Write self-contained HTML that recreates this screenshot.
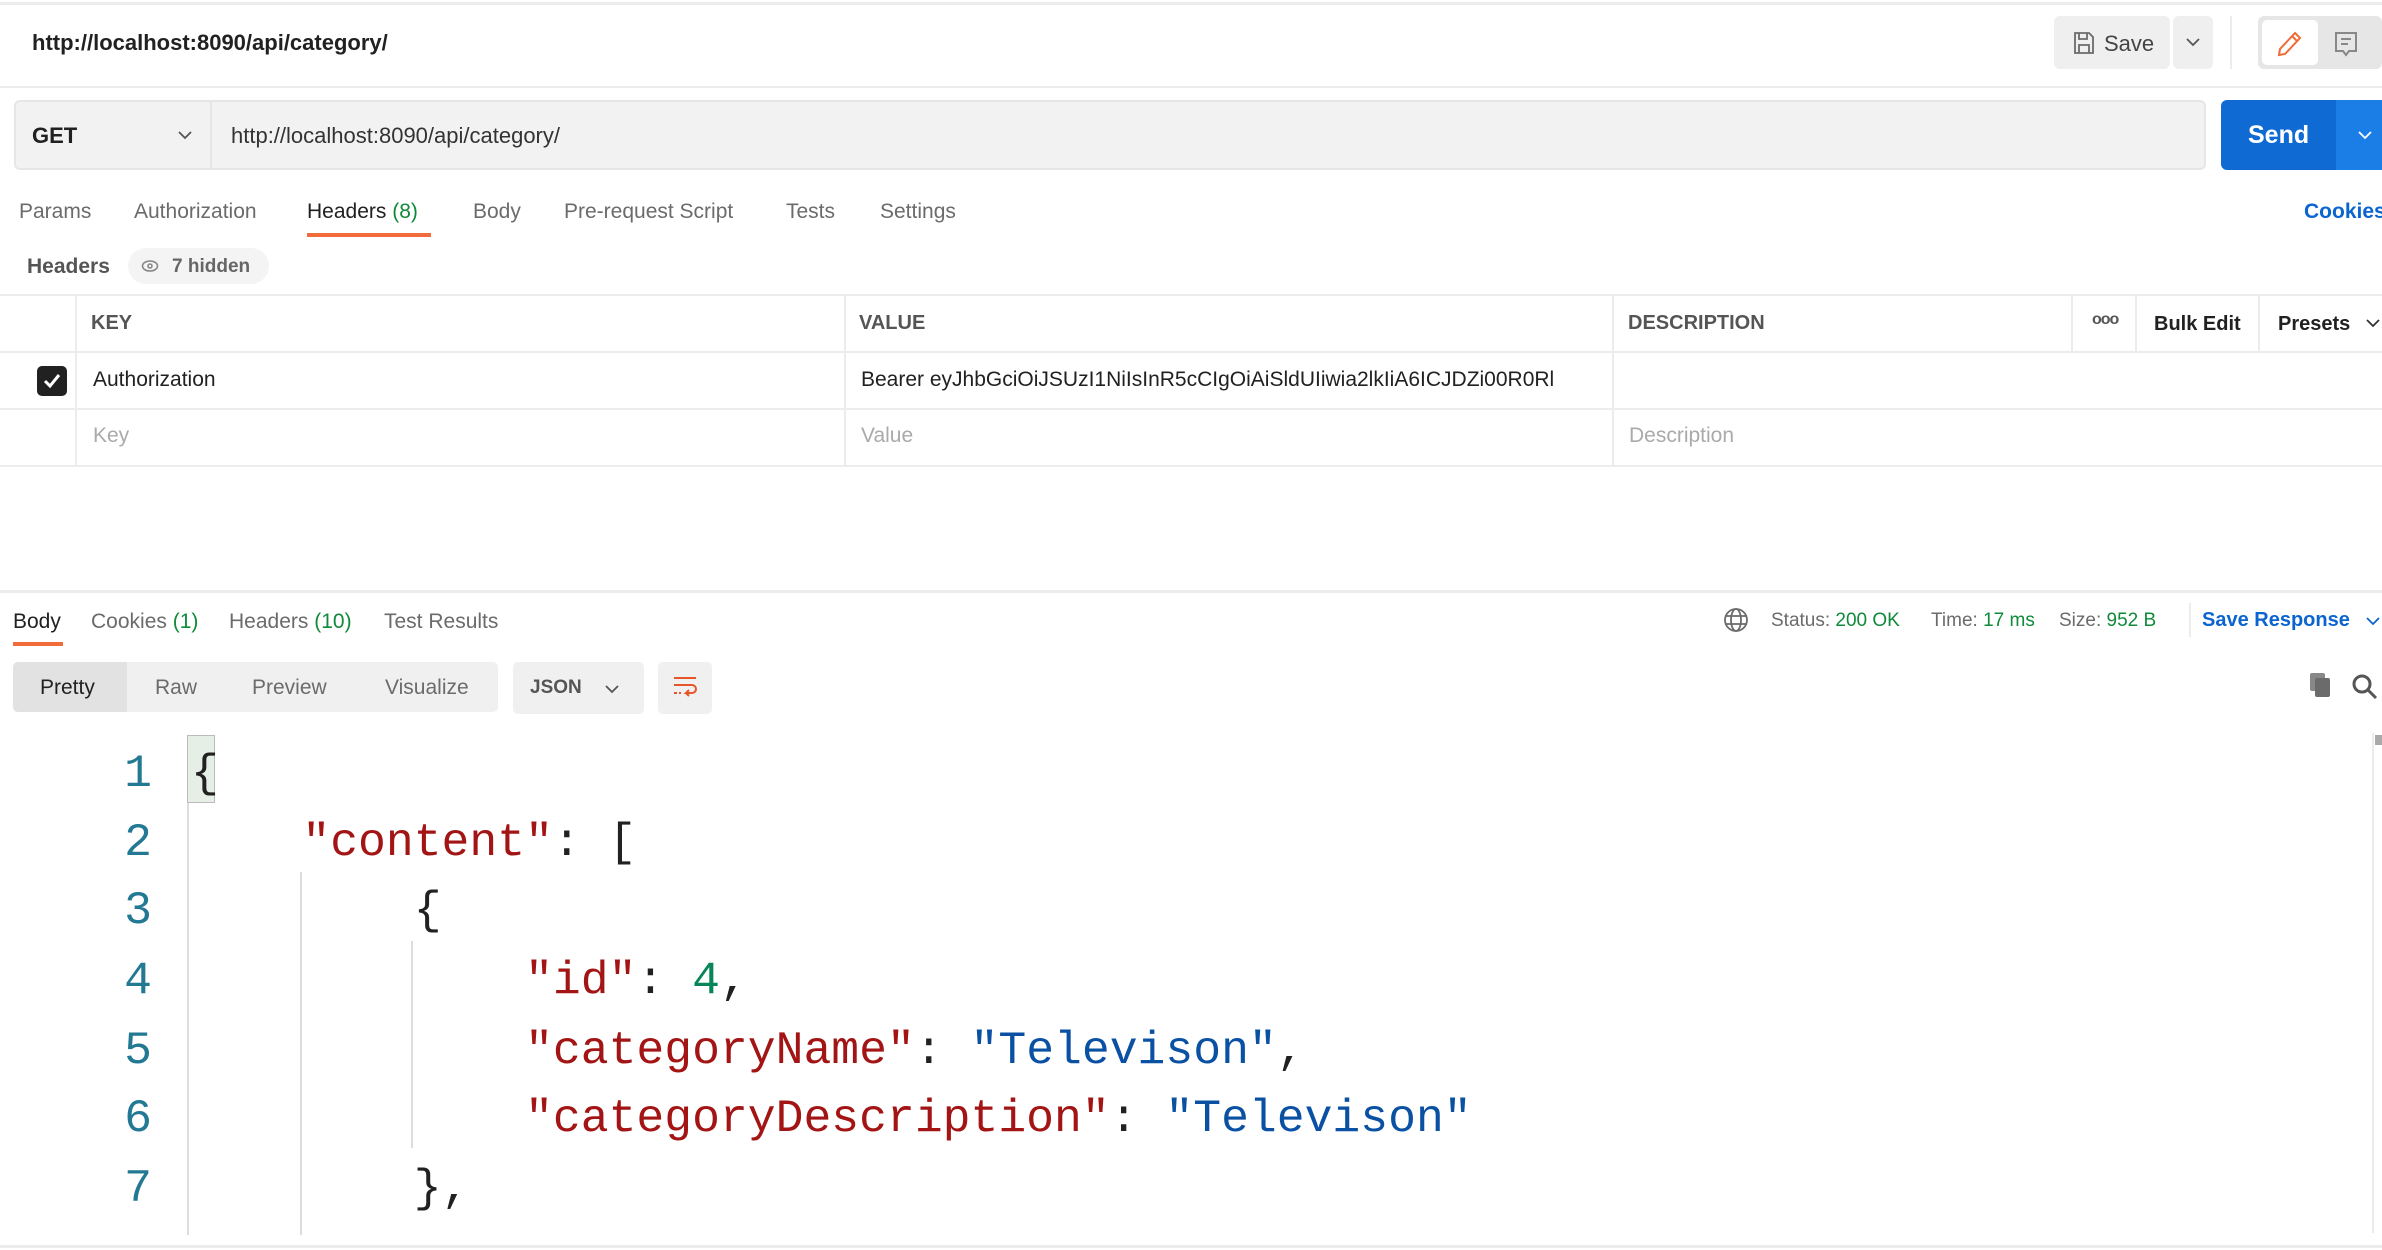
<!DOCTYPE html>
<html><head><meta charset="utf-8"><style>
*{box-sizing:border-box;margin:0;padding:0}
body{width:2382px;height:1250px;overflow:hidden;background:#fff;font-family:"Liberation Sans",sans-serif;color:#212121;position:relative}
.a{position:absolute;white-space:nowrap}
.hl{position:absolute;left:0;right:0;height:2px;background:#ececec}
.vl{position:absolute;width:2px;background:#ececec}
.tab{font-size:21px;color:#6b6b6b}
.g{color:#0f8a3a}
.code{font-family:"Liberation Mono",monospace;font-size:46.4px;white-space:pre}
.s{color:#a31515}.b{color:#0b51a3}.n{color:#098658}
.ln{font-family:"Liberation Mono",monospace;font-size:46.4px;color:#237893;width:60px;text-align:right;left:92px}
</style></head><body>
<div class="hl" style="top:2px;height:3px"></div>
<div class="a" style="left:32px;top:30px;font-size:22px;font-weight:bold;color:#212121">http://localhost:8090/api/category/</div>
<div class="a" style="left:2054px;top:16px;width:116px;height:53px;background:#efefef;border-radius:6px"></div>
<svg class="a" style="left:2072px;top:31px" width="24" height="24" viewBox="0 0 24 24" fill="none" stroke="#6b6b6b" stroke-width="1.8"><path d="M3 2h14l4 4v16H3z M7 2v6h8V2 M7 22v-8h10v8"/></svg>
<div class="a" style="left:2104px;top:31px;font-size:22px;color:#444">Save</div>
<div class="a" style="left:2173px;top:16px;width:40px;height:53px;background:#efefef;border-radius:6px"></div>
<svg class="a" style="left:2184px;top:35px" width="18" height="14" viewBox="0 0 18 14" fill="none" stroke="#555" stroke-width="1.8"><path d="M3 4l6 6 6-6"/></svg>
<div class="a" style="left:2230px;top:16px;width:2px;height:53px;background:#ececec"></div>
<div class="a" style="left:2258px;top:16px;width:124px;height:53px;background:#e6e6e6;border-radius:6px"></div>
<div class="a" style="left:2262px;top:20px;width:56px;height:45px;background:#fff;border-radius:5px"></div>
<svg class="a" style="left:2275px;top:30px" width="28" height="28" viewBox="0 0 28 28" fill="none" stroke="#f06a35" stroke-width="2"><path d="M20 3l5 5L10 24l-6 1 1-6z M17 6l5 5"/></svg>
<svg class="a" style="left:2332px;top:30px" width="28" height="28" viewBox="0 0 28 28" fill="none" stroke="#888" stroke-width="2"><path d="M4 3h20v18H17l-3 4-3-4H4z M9 9h10 M9 14h7"/></svg>
<div class="hl" style="top:86px"></div>
<div class="a" style="left:14px;top:100px;width:2192px;height:70px;background:#f2f2f2;border:2px solid #e6e6e6;border-radius:6px"></div>
<div class="a" style="left:210px;top:102px;width:2px;height:66px;background:#e6e6e6"></div>
<div class="a" style="left:32px;top:123px;font-size:22px;font-weight:bold">GET</div>
<svg class="a" style="left:176px;top:128px" width="18" height="14" viewBox="0 0 18 14" fill="none" stroke="#555" stroke-width="1.8"><path d="M3 4l6 6 6-6"/></svg>
<div class="a" style="left:231px;top:123px;font-size:22px;color:#333">http://localhost:8090/api/category/</div>
<div class="a" style="left:2221px;top:100px;width:161px;height:70px;background:#0f6bd3;border-radius:6px 0 0 6px"></div>
<div class="a" style="left:2336px;top:100px;width:46px;height:70px;background:#1a7ee6"></div>
<div class="a" style="left:2248px;top:121px;font-size:25px;font-weight:bold;color:#fff">Send</div>
<svg class="a" style="left:2356px;top:128px" width="18" height="14" viewBox="0 0 18 14" fill="none" stroke="#fff" stroke-width="1.8"><path d="M3 4l6 6 6-6"/></svg>
<div class="a tab" style="left:19px;top:200px">Params</div>
<div class="a tab" style="left:134px;top:200px">Authorization</div>
<div class="a tab" style="left:307px;top:200px;color:#212121">Headers <span class="g">(8)</span></div>
<div class="a" style="left:307px;top:233px;width:124px;height:4px;background:#f26b3a"></div>
<div class="a tab" style="left:473px;top:200px">Body</div>
<div class="a tab" style="left:564px;top:200px">Pre-request Script</div>
<div class="a tab" style="left:786px;top:200px">Tests</div>
<div class="a tab" style="left:880px;top:200px">Settings</div>
<div class="a" style="left:2304px;top:200px;font-size:21px;font-weight:bold;color:#0b65d0">Cookies</div>
<div class="a" style="left:27px;top:255px;font-size:21px;font-weight:bold;color:#555">Headers</div>
<div class="a" style="left:128px;top:248px;width:141px;height:36px;background:#f4f4f4;border-radius:18px"></div>
<svg class="a" style="left:141px;top:258px" width="18" height="16" viewBox="0 0 18 16" fill="none" stroke="#888" stroke-width="1.6"><ellipse cx="9" cy="8" rx="7.5" ry="5"/><circle cx="9" cy="8" r="2"/></svg>
<div class="a" style="left:172px;top:256px;font-size:19px;font-weight:bold;color:#666">7 hidden</div>
<div class="hl" style="top:294px"></div>
<div class="hl" style="top:351px"></div>
<div class="hl" style="top:408px"></div>
<div class="hl" style="top:465px"></div>
<div class="vl" style="left:75px;top:296px;height:169px"></div>
<div class="vl" style="left:844px;top:296px;height:169px"></div>
<div class="vl" style="left:1612px;top:296px;height:169px"></div>
<div class="vl" style="left:2071px;top:296px;height:55px"></div>
<div class="vl" style="left:2135px;top:296px;height:55px"></div>
<div class="vl" style="left:2258px;top:296px;height:55px"></div>
<div class="a" style="left:91px;top:312px;font-size:20px;font-weight:bold;color:#555">KEY</div>
<div class="a" style="left:859px;top:312px;font-size:20px;font-weight:bold;color:#555">VALUE</div>
<div class="a" style="left:1628px;top:312px;font-size:20px;font-weight:bold;color:#555">DESCRIPTION</div>
<div class="a" style="left:2092px;top:311px;font-size:16px;font-weight:bold;color:#555;letter-spacing:-1px">ooo</div>
<div class="a" style="left:2154px;top:313px;font-size:20px;font-weight:bold">Bulk Edit</div>
<div class="a" style="left:2278px;top:313px;font-size:20px;font-weight:bold">Presets</div>
<svg class="a" style="left:2364px;top:316px" width="18" height="14" viewBox="0 0 18 14" fill="none" stroke="#333" stroke-width="1.8"><path d="M3 4l6 6 6-6"/></svg>
<div class="a" style="left:37px;top:366px;width:30px;height:30px;background:#212121;border-radius:5px"></div>
<svg class="a" style="left:41px;top:370px" width="22" height="22" viewBox="0 0 22 22" fill="none" stroke="#fff" stroke-width="3"><path d="M4 11l5 5 9-11"/></svg>
<div class="a" style="left:93px;top:368px;font-size:21px">Authorization</div>
<div class="a" style="left:861px;top:368px;font-size:21px">Bearer eyJhbGciOiJSUzI1NiIsInR5cCIgOiAiSldUIiwia2lkIiA6ICJDZi00R0Rl</div>
<div class="a" style="left:93px;top:424px;font-size:21px;color:#aaa">Key</div>
<div class="a" style="left:861px;top:424px;font-size:21px;color:#aaa">Value</div>
<div class="a" style="left:1629px;top:424px;font-size:21px;color:#aaa">Description</div>
<div class="hl" style="top:590px;height:3px"></div>
<div class="a tab" style="left:13px;top:610px;color:#212121">Body</div>
<div class="a" style="left:13px;top:642px;width:50px;height:4px;background:#f26b3a"></div>
<div class="a tab" style="left:91px;top:610px">Cookies <span class="g">(1)</span></div>
<div class="a tab" style="left:229px;top:610px">Headers <span class="g">(10)</span></div>
<div class="a tab" style="left:384px;top:610px">Test Results</div>
<svg class="a" style="left:1723px;top:607px" width="26" height="26" viewBox="0 0 26 26" fill="none" stroke="#6b6b6b" stroke-width="1.8"><circle cx="13" cy="13" r="11"/><ellipse cx="13" cy="13" rx="5" ry="11"/><path d="M2 9h22M2 17h22"/></svg>
<div class="a" style="left:1771px;top:610px;font-size:19px;color:#6b6b6b">Status: <span class="g">200 OK</span></div>
<div class="a" style="left:1931px;top:610px;font-size:19px;color:#6b6b6b">Time: <span class="g">17 ms</span></div>
<div class="a" style="left:2059px;top:610px;font-size:19px;color:#6b6b6b">Size: <span class="g">952 B</span></div>
<div class="a" style="left:2189px;top:603px;width:2px;height:34px;background:#ececec"></div>
<div class="a" style="left:2202px;top:609px;font-size:20px;font-weight:bold;color:#0b65d0">Save Response</div>
<svg class="a" style="left:2364px;top:614px" width="18" height="14" viewBox="0 0 18 14" fill="none" stroke="#0b65d0" stroke-width="1.8"><path d="M3 4l6 6 6-6"/></svg>
<div class="a" style="left:13px;top:662px;width:485px;height:50px;background:#f0f0f0;border-radius:5px"></div>
<div class="a" style="left:13px;top:662px;width:114px;height:50px;background:#e2e2e2;border-radius:5px 0 0 5px"></div>
<div class="a" style="left:40px;top:676px;font-size:21px">Pretty</div>
<div class="a tab" style="left:155px;top:676px">Raw</div>
<div class="a tab" style="left:252px;top:676px">Preview</div>
<div class="a tab" style="left:385px;top:676px">Visualize</div>
<div class="a" style="left:513px;top:662px;width:131px;height:52px;background:#f0f0f0;border-radius:5px"></div>
<div class="a" style="left:530px;top:677px;font-size:19px;font-weight:bold;color:#555">JSON</div>
<svg class="a" style="left:603px;top:682px" width="18" height="14" viewBox="0 0 18 14" fill="none" stroke="#555" stroke-width="1.8"><path d="M3 4l6 6 6-6"/></svg>
<div class="a" style="left:658px;top:662px;width:54px;height:52px;background:#f0f0f0;border-radius:5px"></div>
<svg class="a" style="left:670px;top:674px" width="30" height="28" viewBox="0 0 30 28" fill="none" stroke="#e8552a" stroke-width="2"><path d="M4 4h22M4 11h18a4 4 0 010 8h-6l3-3M16 19l3 3M4 19h3M9 19h2"/></svg>
<svg class="a" style="left:2308px;top:671px" width="26" height="28" viewBox="0 0 26 28"><rect x="2" y="2" width="15" height="18" rx="2" fill="#888"/><rect x="7" y="7" width="15" height="19" rx="2" fill="#6b6b6b"/></svg>
<svg class="a" style="left:2350px;top:672px" width="28" height="28" viewBox="0 0 28 28" fill="none" stroke="#555" stroke-width="3"><circle cx="12" cy="12" r="8"/><path d="M18 18l8 8"/></svg>
<div class="a" style="left:2375px;top:735px;width:7px;height:10px;background:#aaa"></div>
<div class="a" style="left:2372px;top:733px;width:2px;height:500px;background:#ececec"></div>
<div class="a" style="left:187px;top:735px;width:2px;height:500px;background:#ddd"></div>
<div class="a" style="left:300px;top:872px;width:2px;height:363px;background:#ddd"></div>
<div class="a" style="left:411px;top:941px;width:2px;height:207px;background:#ddd"></div>
<div class="a" style="left:187px;top:735px;width:28px;height:68px;background:#e6efe6;border:1px solid #bbb"></div>
<div class="a ln" style="top:747px">1</div>
<div class="a ln" style="top:816px">2</div>
<div class="a ln" style="top:884px">3</div>
<div class="a ln" style="top:954px">4</div>
<div class="a ln" style="top:1024px">5</div>
<div class="a ln" style="top:1092px">6</div>
<div class="a ln" style="top:1162px">7</div>
<div class="a code" style="left:191px;top:747px">{</div>
<div class="a code" style="left:191px;top:816px">    <span class="s">"content"</span>: [</div>
<div class="a code" style="left:191px;top:884px">        {</div>
<div class="a code" style="left:191px;top:954px">            <span class="s">"id"</span>: <span class="n">4</span>,</div>
<div class="a code" style="left:191px;top:1024px">            <span class="s">"categoryName"</span>: <span class="b">"Televison"</span>,</div>
<div class="a code" style="left:191px;top:1092px">            <span class="s">"categoryDescription"</span>: <span class="b">"Televison"</span></div>
<div class="a code" style="left:191px;top:1162px">        },</div>
<div class="hl" style="top:1245px;height:3px"></div>
</body></html>
